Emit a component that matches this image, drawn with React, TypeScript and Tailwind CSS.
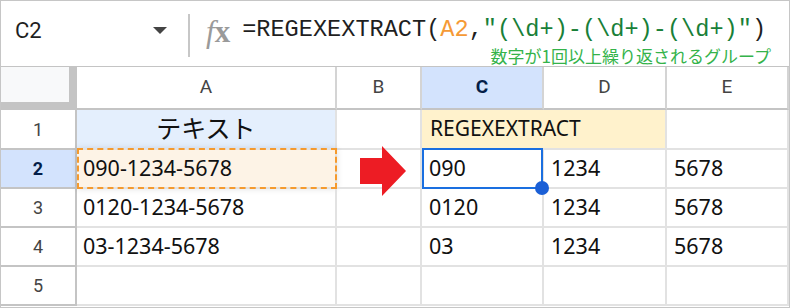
const cellFont = { fontFamily: '"Noto Sans", "Noto Sans CJK JP", sans-serif' };

const cols = ["A", "B", "C", "D", "E"];

const rows = [
  ["", "", "", "", ""],
  ["090-1234-5678", "", "090", "1234", "5678"],
  ["0120-1234-5678", "", "0120", "1234", "5678"],
  ["03-1234-5678", "", "03", "1234", "5678"],
  ["", "", "", "", ""],
];

function Arrow() {
  return (
    <svg
      width="46"
      height="50"
      viewBox="0 0 46 50"
      className="absolute left-[23px] top-[-4px] z-10"
    >
      <path d="M0 12H22V0L46 25L22 50V38H0Z" fill="#ed1c24" />
    </svg>
  );
}

export default function App() {
  return (
    <div className="w-[790px] h-[308px] overflow-hidden bg-white border border-[#c6c6c6]">
      {/* formula bar */}
      <div className="h-[66px] border-b border-[#c4c4c4] flex">
        <div
          className="w-[187px] h-[58px] flex items-center justify-between pl-[14px] pr-[21px] text-[22px] text-[#1f1f1f]"
          style={{ fontFamily: "Roboto, sans-serif" }}
        >
          <span>C2</span>
          <span className="w-0 h-0 border-l-[7px] border-r-[7px] border-t-[7px] border-l-transparent border-r-transparent border-t-[#444]" />
        </div>
        <div className="w-[2px] bg-[#c7c7c7] mt-[13px] h-[43px]" />
        <div
          className="ml-[16px] mt-[14px] text-[31px] leading-[34px] text-[#9a9a9a]"
          style={{ fontFamily: '"Liberation Serif", serif' }}
        >
          <span className="italic">f</span>
          <span className="font-bold">x</span>
        </div>
        <div className="ml-[12px] flex-1 flex flex-col pt-[15px] pr-[18px]">
          <div
            className="text-[23.6px] leading-[28px] text-[#1f1f1f] whitespace-pre"
            style={{ fontFamily: '"Liberation Mono", monospace' }}
          >
            =REGEXEXTRACT(<span className="text-[#f59a36]">A2</span>,
            <span className="text-[#188038]">"(\d+)-(\d+)-(\d+)"</span>)
          </div>
          <div
            className="mt-[2px] self-end text-[17px] leading-[20px] text-[#34b34a]"
            style={{ fontFamily: '"Noto Sans CJK JP", sans-serif' }}
          >
            数字が1回以上繰り返されるグループ
          </div>
        </div>
      </div>

      {/* grid */}
      <div
        className="grid grid-cols-[76px_260px_85px_122px_123px_122px] grid-rows-[43px_40px_39px_39px_39px_39px]"
        style={{ fontFamily: "Roboto, sans-serif" }}
      >
        <div className="bg-[#f8f9fa] border-r-[8px] border-b-[8px] border-[#c4c4c4]" />
        {cols.map((c) => (
          <div
            key={c}
            className={
              "flex items-center justify-center border-r-2 border-b-2 border-r-[#d4d4d4] border-b-[#c4c4c4] text-[19px] " +
              (c === "C"
                ? "bg-[#d3e3fd] font-bold text-[#041e49]"
                : "text-[#444]")
            }
          >
            {c}
          </div>
        ))}

        {rows.map((r, ri) => (
          <>
            <div
              key={"h" + ri}
              className={
                "flex items-center justify-center border-r-2 border-b-2 border-[#c4c4c4] text-[18px] " +
                (ri === 1
                  ? "bg-[#d3e3fd] font-bold text-[#041e49]"
                  : "text-[#444]")
              }
            >
              {ri + 1}
            </div>
            {ri === 0 ? (
              <>
                <div
                  className="bg-[#e4effd] flex items-center justify-center border-r-2 border-b-2 border-[#e2e2e2] text-[25px] text-[#111]"
                  style={cellFont}
                >
                  テキスト
                </div>
                <div className="border-r-2 border-b-2 border-[#e2e2e2]" />
                <div
                  className="col-span-2 bg-[#fff2cc] flex items-center pl-[8px] border-r-2 border-b-2 border-[#e2e2e2] text-[21px] text-[#111]"
                  style={cellFont}
                >
                  REGEXEXTRACT
                </div>
                <div className="border-r-2 border-b-2 border-[#e2e2e2]" />
              </>
            ) : (
              r.map((v, ci) => (
                <div
                  key={ci}
                  className={
                    "relative flex items-center border-r-2 border-b-2 border-[#e2e2e2] text-[21.5px] text-[#111] " +
                    (ci === 0 ? "pl-[6px] " : "pl-[7px] ") +
                    (ri === 1 && ci === 0 ? "bg-[#fdf3e6]" : "")
                  }
                  style={cellFont}
                >
                  {v}
                  {ri === 1 && ci === 0 && (
                    <div className="absolute top-[-2px] left-0 right-[-2px] bottom-[-2px] border-2 border-dashed border-[#f59a2e] shadow-[0_0_6px_rgba(0,0,0,0.12)]" />
                  )}
                  {ri === 1 && ci === 1 && <Arrow />}
                  {ri === 1 && ci === 2 && (
                    <div className="absolute top-[-2px] left-0 right-[-1px] bottom-[-2px] border-2 border-[#1a6fe0]">
                      <div className="absolute right-[-8px] bottom-[-8px] w-[14px] h-[14px] rounded-full bg-[#1a5fd6] z-20" />
                    </div>
                  )}
                </div>
              ))
            )}
          </>
        ))}
      </div>
    </div>
  );
}
